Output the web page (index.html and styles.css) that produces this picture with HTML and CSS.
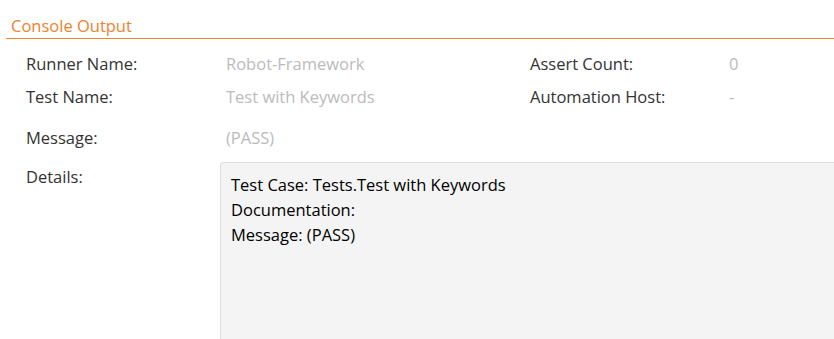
FILE: index.html
```html
<!DOCTYPE html>
<html>
<head>
<meta charset="utf-8">
<link rel="stylesheet" href="styles.css">
</head>
<body>
<div class="page">
  <h2 class="section-title">Console Output</h2>
  <div class="props">
    <div class="label">Runner Name:</div>
    <div class="value">Robot-Framework</div>
    <div class="label">Assert Count:</div>
    <div class="value">0</div>
    <div class="label">Test Name:</div>
    <div class="value">Test with Keywords</div>
    <div class="label">Automation Host:</div>
    <div class="value">-</div>
  </div>
  <div class="row message-row">
    <div class="label">Message:</div>
    <div class="value">(PASS)</div>
  </div>
  <div class="row details-row">
    <div class="label details-label">Details:</div>
    <div class="details-box">
      <div>Test Case: Tests.Test with Keywords</div>
      <div>Documentation:</div>
      <div>Message: (PASS)</div>
    </div>
  </div>
</div>
</body>
</html>
```
FILE: styles.css
```css
html, body {
  margin: 0;
  padding: 0;
  background: #fff;
  overflow: hidden;
}
body {
  font-family: "Open Sans", "Noto Sans", sans-serif;
  font-size: 16.5px;
  color: #333;
}
.page {
  width: 834px;
  height: 339px;
  overflow: hidden;
}
.section-title {
  margin: 0 0 0 6px;
  padding: 14px 0 0 5px;
  font-size: 16.5px;
  font-weight: normal;
  line-height: 24px;
  color: #f0812c;
  border-bottom: 1px solid #f0812c;
}
.props {
  display: grid;
  grid-template-columns: 200px 304px 199px 1fr;
  grid-auto-rows: 33px;
  padding: 14px 0 0 26px;
}
.label {
  color: #333;
  line-height: 22px;
}
.value {
  color: #bbb;
  line-height: 22px;
}
.row {
  display: grid;
  grid-template-columns: 194px 1fr;
  padding-left: 26px;
}
.row .value {
  padding-left: 6px;
}
.message-row {
  margin-top: 8px;
}
.details-row {
  margin-top: 13px;
}
.details-label {
  padding-top: 4px;
}
.details-box {
  background: #f4f4f4;
  border: 1px solid #ddd;
  border-radius: 3px;
  width: 640px;
  height: 200px;
  padding: 9px 10px;
  color: #000;
  line-height: 25px;
}
```
